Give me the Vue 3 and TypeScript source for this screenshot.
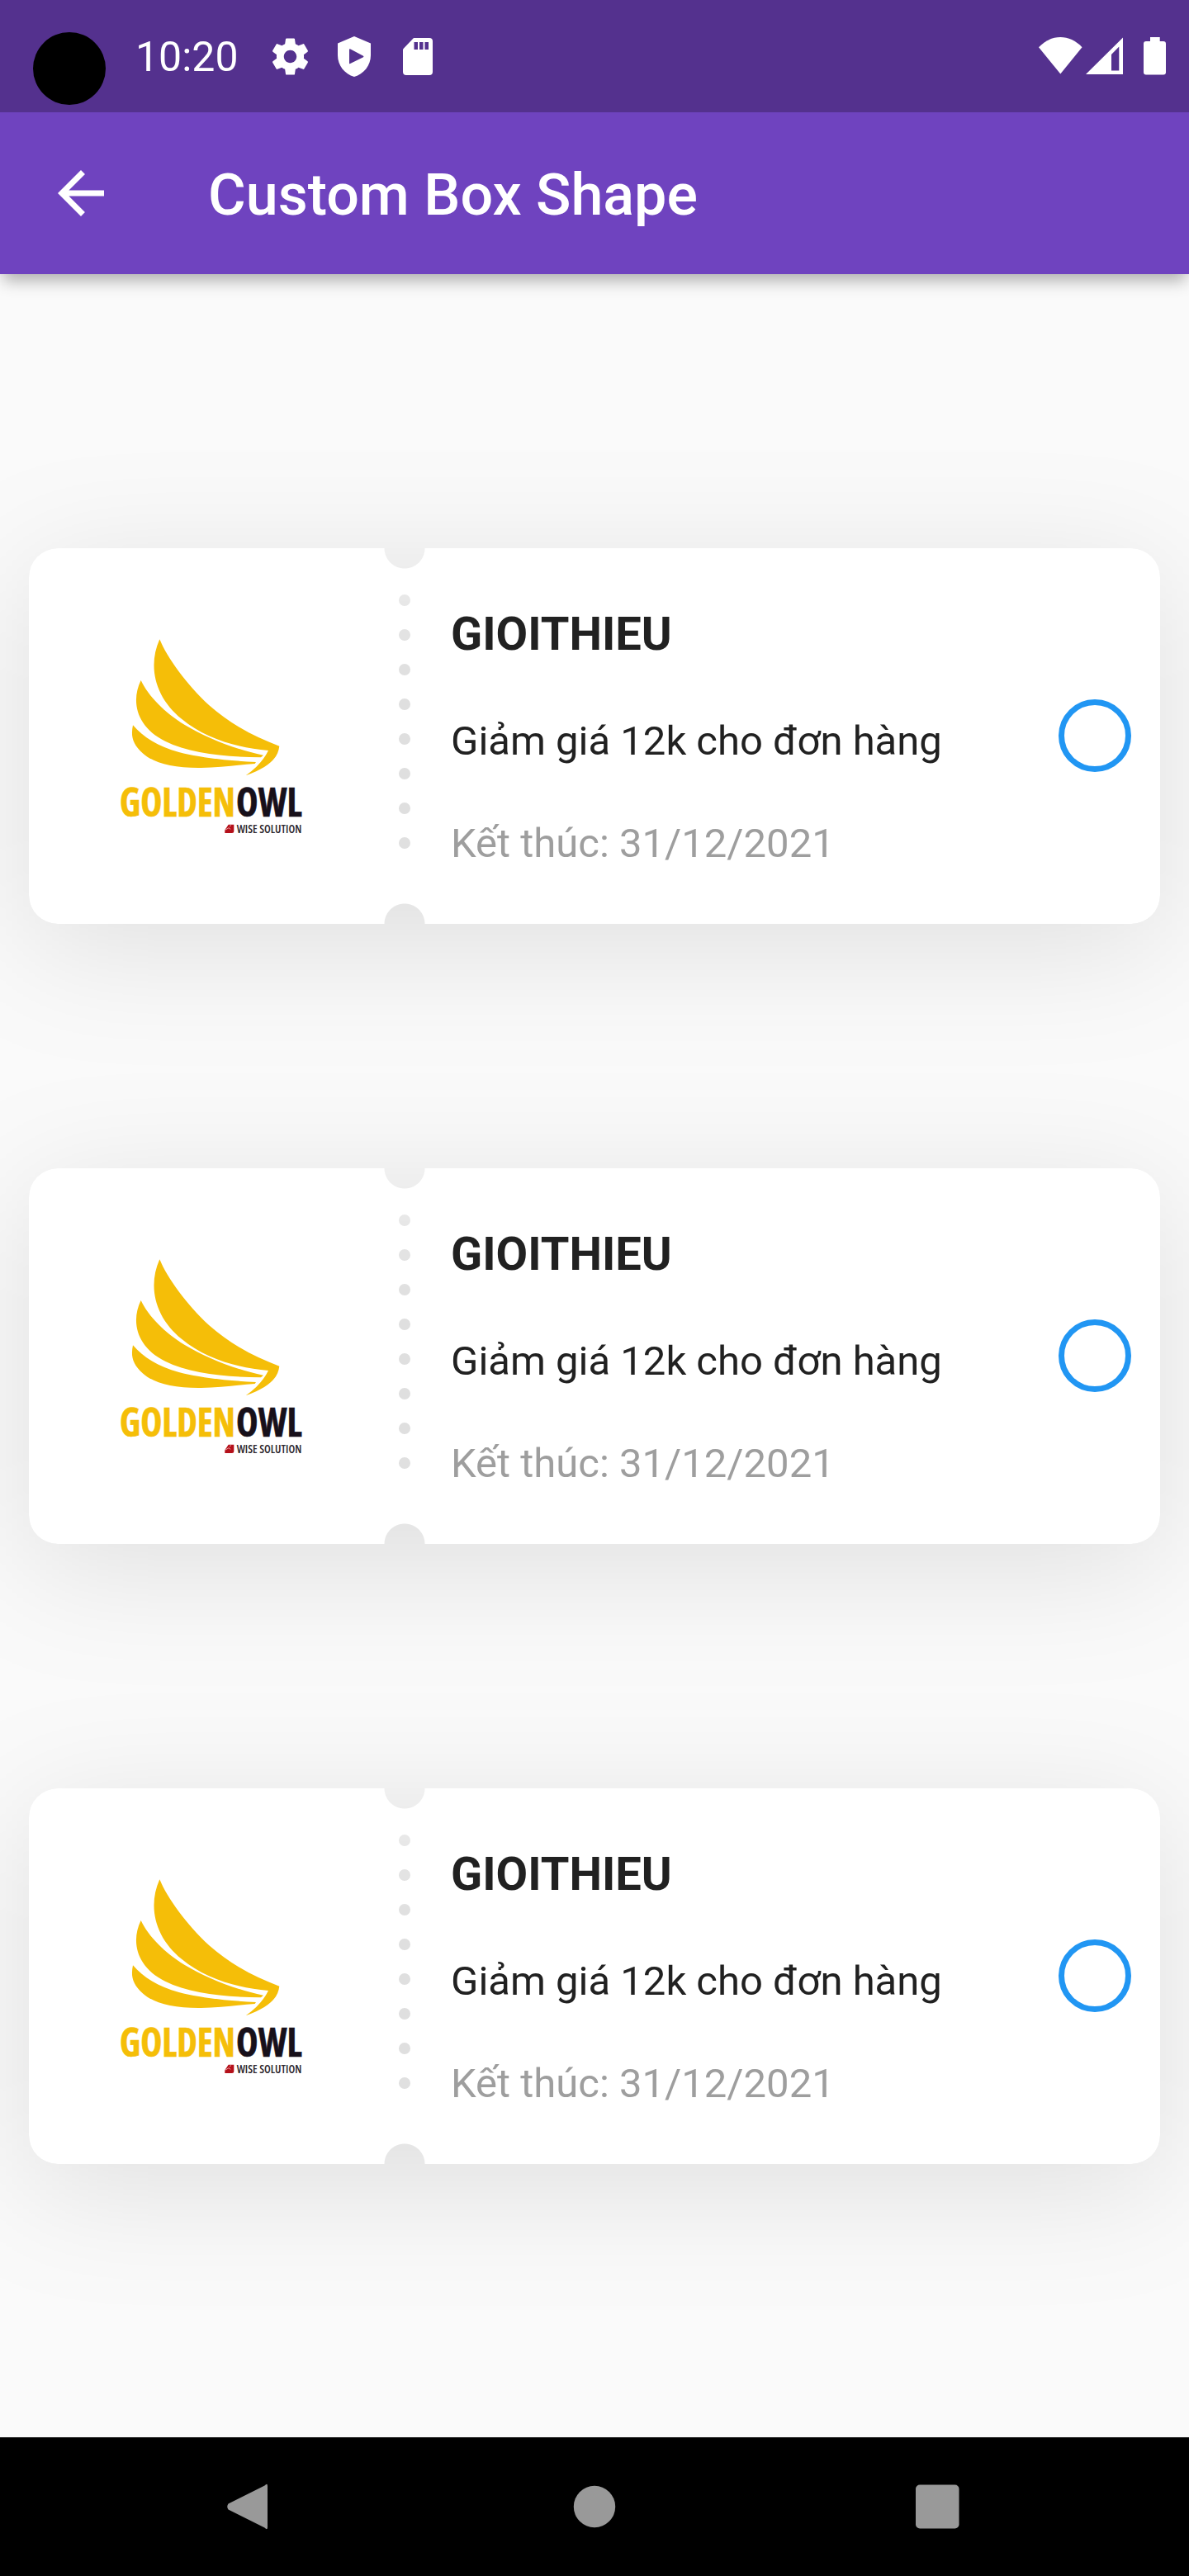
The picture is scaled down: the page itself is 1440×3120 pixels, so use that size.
<script setup lang="ts">
interface Voucher {
  code: string
  description: string
  expiry: string
}

const vouchers: Voucher[] = Array.from({ length: 3 }, () => ({
  code: 'GIOITHIEU',
  description: 'Giảm giá 12k cho đơn hàng',
  expiry: 'Kết thúc: 31/12/2021',
}))
</script>

<template>
  <div class="screen">
    <header class="status">
      <span class="camera"></span>
      <span class="clock">10:20</span>
      <svg class="gear" viewBox="0 0 24 24"><path d="M19.43 12.98c.04-.32.07-.64.07-.98s-.03-.66-.07-.98l2.11-1.65c.19-.15.24-.42.12-.64l-2-3.46c-.12-.22-.39-.3-.61-.22l-2.49 1c-.52-.4-1.08-.73-1.69-.98l-.38-2.65C14.46 2.18 14.25 2 14 2h-4c-.25 0-.46.18-.49.42l-.38 2.65c-.61.25-1.17.59-1.69.98l-2.49-1c-.23-.09-.49 0-.61.22l-2 3.46c-.13.22-.07.49.12.64l2.11 1.65c-.04.32-.07.65-.07.98s.03.66.07.98l-2.11 1.65c-.19.15-.24.42-.12.64l2 3.46c.12.22.39.3.61.22l2.49-1c.52.4 1.08.73 1.69.98l.38 2.65c.03.24.24.42.49.42h4c.25 0 .46-.18.49-.42l.38-2.65c.61-.25 1.17-.59 1.69-.98l2.49 1c.23.09.49 0 .61-.22l2-3.46c.12-.22.07-.49-.12-.64l-2.11-1.65zM12 15.5c-1.93 0-3.5-1.57-3.5-3.5s1.57-3.5 3.5-3.5 3.5 1.57 3.5 3.5-1.57 3.5-3.5 3.5z" /></svg>
      <svg class="shield" viewBox="0 0 40 49"><path fill-rule="evenodd" d="M20 0 40 8.5V23C40 35 31.500 46 20 49 8.500 46 0 35 0 23V8.500ZM14 16V32.500Q14 33.700 15.200 33L31 25.300Q32 24.500 31 23.700L15.500 15.400Q14 14.800 14 16Z" /></svg>
      <svg class="sd" viewBox="0 0 36 45"><path fill-rule="evenodd" d="M13.500 0H32Q36 0 36 4V41Q36 45 32 45H4Q0 45 0 41V14.500Q0 13.500 1 12.500L12 1Q12.700 0 13.500 0ZM13.500 5V14H18V5ZM20 5V14H24.500V5ZM26.500 5V14H31V5Z" /></svg>
      <span class="spacer"></span>
      <svg class="signals" viewBox="0 0 154 46" fill-rule="evenodd">
        <path d="M0 12.300C15-4 37.500-4 52.500 12.300L26.300 44.600Z" />
        <path d="M57 45 102 .500V45ZM88 21V40.500H97.300V11.500Z" />
        <path d="M135 0H146.700V5H151Q154 5 154 8V42.500Q154 45.500 151 45.500H130Q127 45.500 127 42.500V8Q127 5 130 5H135Z" />
      </svg>
    </header>

    <nav class="appbar">
      <svg class="back" viewBox="0 0 24 24"><path d="M20 11H7.830l5.590-5.590L12 4l-8 8 8 8 1.410-1.410L7.830 13H20v-2z" /></svg>
      <h1>Custom Box Shape</h1>
    </nav>

    <main class="list">
      <article v-for="(voucher, i) in vouchers" :key="i" class="voucher">
        <div class="ticket">
          <div class="brand">
            <svg class="logo" viewBox="0 0 840 870">
              <g fill="#f5be08">
                <path d="M220 100C248 168 318 264 400 340C470 403 560 453 655 488C650 530 622 562 533 595C575 565 600 535 615 504C500 493 385 460 300 389C205 312 175 200 220 100Z" />
                <path d="M152 249C178 305 240 368 310 410C390 457 485 497 597 521L588 529C460 528 330 514 240 470C135 418 115 325 152 249Z" />
                <path d="M123 412C160 455 215 490 290 510C360 528 450 540 570 546L566 552C500 556 440 566 370 567C270 568 200 550 160 515C120 480 115 450 123 412Z" />
              </g>
              <g class="wordmark" font-size="144" stroke-width="2">
                <text x="75" y="744" textLength="420" lengthAdjust="spacingAndGlyphs" fill="#f5be08" stroke="#f5be08">GOLDEN</text>
                <text x="498" y="744" textLength="239" lengthAdjust="spacingAndGlyphs" fill="#17101a" stroke="#17101a">OWL</text>
              </g>
              <path d="M470 773H490V797Q490 804 483 804H457V793Z" fill="#b4101a" />
              <path d="M458 793 471 785 478 790M474 779 480 776" stroke="#e9a0a0" stroke-width="3" fill="none" />
              <text class="tagline" x="500" y="804" font-size="45" textLength="236" lengthAdjust="spacingAndGlyphs" fill="#2b262c">WISE SOLUTION</text>
            </svg>
          </div>
          <div class="details">
            <h2>{{ voucher.code }}</h2>
            <p class="description">{{ voucher.description }}</p>
            <p class="expiry">{{ voucher.expiry }}</p>
          </div>
          <span class="radio"></span>
        </div>
      </article>
    </main>

    <footer class="navbar">
      <svg viewBox="0 0 84 84"><path d="M57.500 16.500Q61 13 61 17V67Q61 71 57.500 67.500L13.500 45.500Q11 42 13.500 38.500Z" /></svg>
      <svg viewBox="0 0 84 84"><circle cx="42" cy="42" r="25.200" /></svg>
      <svg viewBox="0 0 84 84"><rect x="16" y="15.500" width="52.500" height="53" rx="5" /></svg>
    </footer>
  </div>
</template>

<style>
body {
  margin: 0;
}
</style>

<style scoped>
.screen {
  width: 1440px;
  height: 3120px;
  display: flex;
  flex-direction: column;
  overflow: hidden;
  background: #fafafa;
  font-family: Roboto, sans-serif;
}
.status {
  height: 136px;
  flex: none;
  display: flex;
  background: #54318e;
  color: #fff;
  position: relative;
  z-index: 2;
}
.status svg {
  flex: none;
  fill: currentColor;
}
.camera {
  width: 88px;
  height: 88px;
  margin: 39px 0 0 40px;
  border-radius: 50%;
  background: #000;
}
.clock {
  width: 124px;
  margin: 41px 0 0 36px;
  font-size: 50px;
  line-height: 57px;
}
.gear {
  width: 53px;
  height: 53px;
  margin: 42px 0 0 37px;
}
.shield {
  width: 40px;
  height: 49px;
  margin: 44px 0 0 31px;
}
.sd {
  width: 36px;
  height: 45px;
  margin: 46px 0 0 39px;
}
.spacer {
  flex: 1;
}
.signals {
  width: 154px;
  height: 46px;
  margin: 45px 28px 0 0;
}
.appbar {
  height: 196px;
  flex: none;
  display: flex;
  align-items: center;
  background: #6f43bf;
  color: #fff;
  position: relative;
  z-index: 1;
  box-shadow: 0 12px 18px -4px rgba(0, 0, 0, 0.3);
}
.back {
  width: 84px;
  height: 84px;
  margin: 8px 112px 8px 56px;
  fill: currentColor;
}
h1 {
  margin: 4px 0 0;
  font-size: 70px;
  font-weight: 500;
  line-height: 82px;
  white-space: nowrap;
}
.list {
  flex: 1;
  min-height: 0;
  display: flex;
  flex-direction: column;
  justify-content: center;
  gap: 296px;
}
.voucher {
  flex: none;
  height: 455px;
  margin: 0 35px;
  position: relative;
}
.voucher::before {
  content: '';
  position: absolute;
  inset: 28px 0 -28px;
  border-radius: 35px;
  background: rgba(0, 0, 0, 0.107);
  filter: blur(75px);
}
.ticket {
  height: 100%;
  display: flex;
  position: relative;
  border-radius: 35px;
  background: #fff;
  /* Cuts the perforation dots and the two half-round notches out of the card. */
  mask-image:
    radial-gradient(circle at 455px 0, transparent 24px, #000 25px),
    radial-gradient(circle at 455px 455px, transparent 24px, #000 25px),
    linear-gradient(#000, #000),
    url("data:image/svg+xml,%3Csvg xmlns='http://www.w3.org/2000/svg' width='14' height='308'%3E%3Cpath d='M7 7V302' stroke='%23000' stroke-width='14' stroke-linecap='round' stroke-dasharray='0 42'/%3E%3C/svg%3E");
  mask-size: 100% 100%, 100% 100%, 100% 100%, 14px 308px;
  mask-position: 0 0, 0 0, 0 0, 448px 56px;
  mask-repeat: no-repeat;
  mask-composite: intersect, intersect, exclude;
}
.brand {
  width: 455px;
  flex: none;
}
.logo {
  display: block;
  width: 280px;
  height: 290px;
  margin: 77px 0 0 85px;
}
.wordmark {
  font-family: "Open Sans", sans-serif;
  font-weight: 700;
  font-stretch: 75%;
}
.tagline {
  font-family: "Open Sans", sans-serif;
  font-weight: 600;
  font-stretch: 75%;
}
.details {
  flex: 1;
  padding: 71px 0 0 56px;
  white-space: nowrap;
}
h2 {
  margin: 0;
  font-size: 56px;
  font-weight: 700;
  line-height: 66px;
  color: #212121;
}
p {
  margin: 0;
  font-size: 49px;
  line-height: 58px;
}
.description {
  margin-top: 68px;
  color: #212121;
}
.expiry {
  margin-top: 66px;
  color: #9e9e9e;
}
.radio {
  box-sizing: border-box;
  width: 88px;
  height: 88px;
  margin: 0 35px 0 0;
  align-self: center;
  border: 7px solid #2196f3;
  border-radius: 50%;
}
.navbar {
  height: 168px;
  flex: none;
  display: flex;
  align-items: center;
  justify-content: center;
  gap: 331px;
  background: #000;
  position: relative;
}
.navbar svg {
  width: 84px;
  height: 84px;
  fill: #999;
}
</style>
